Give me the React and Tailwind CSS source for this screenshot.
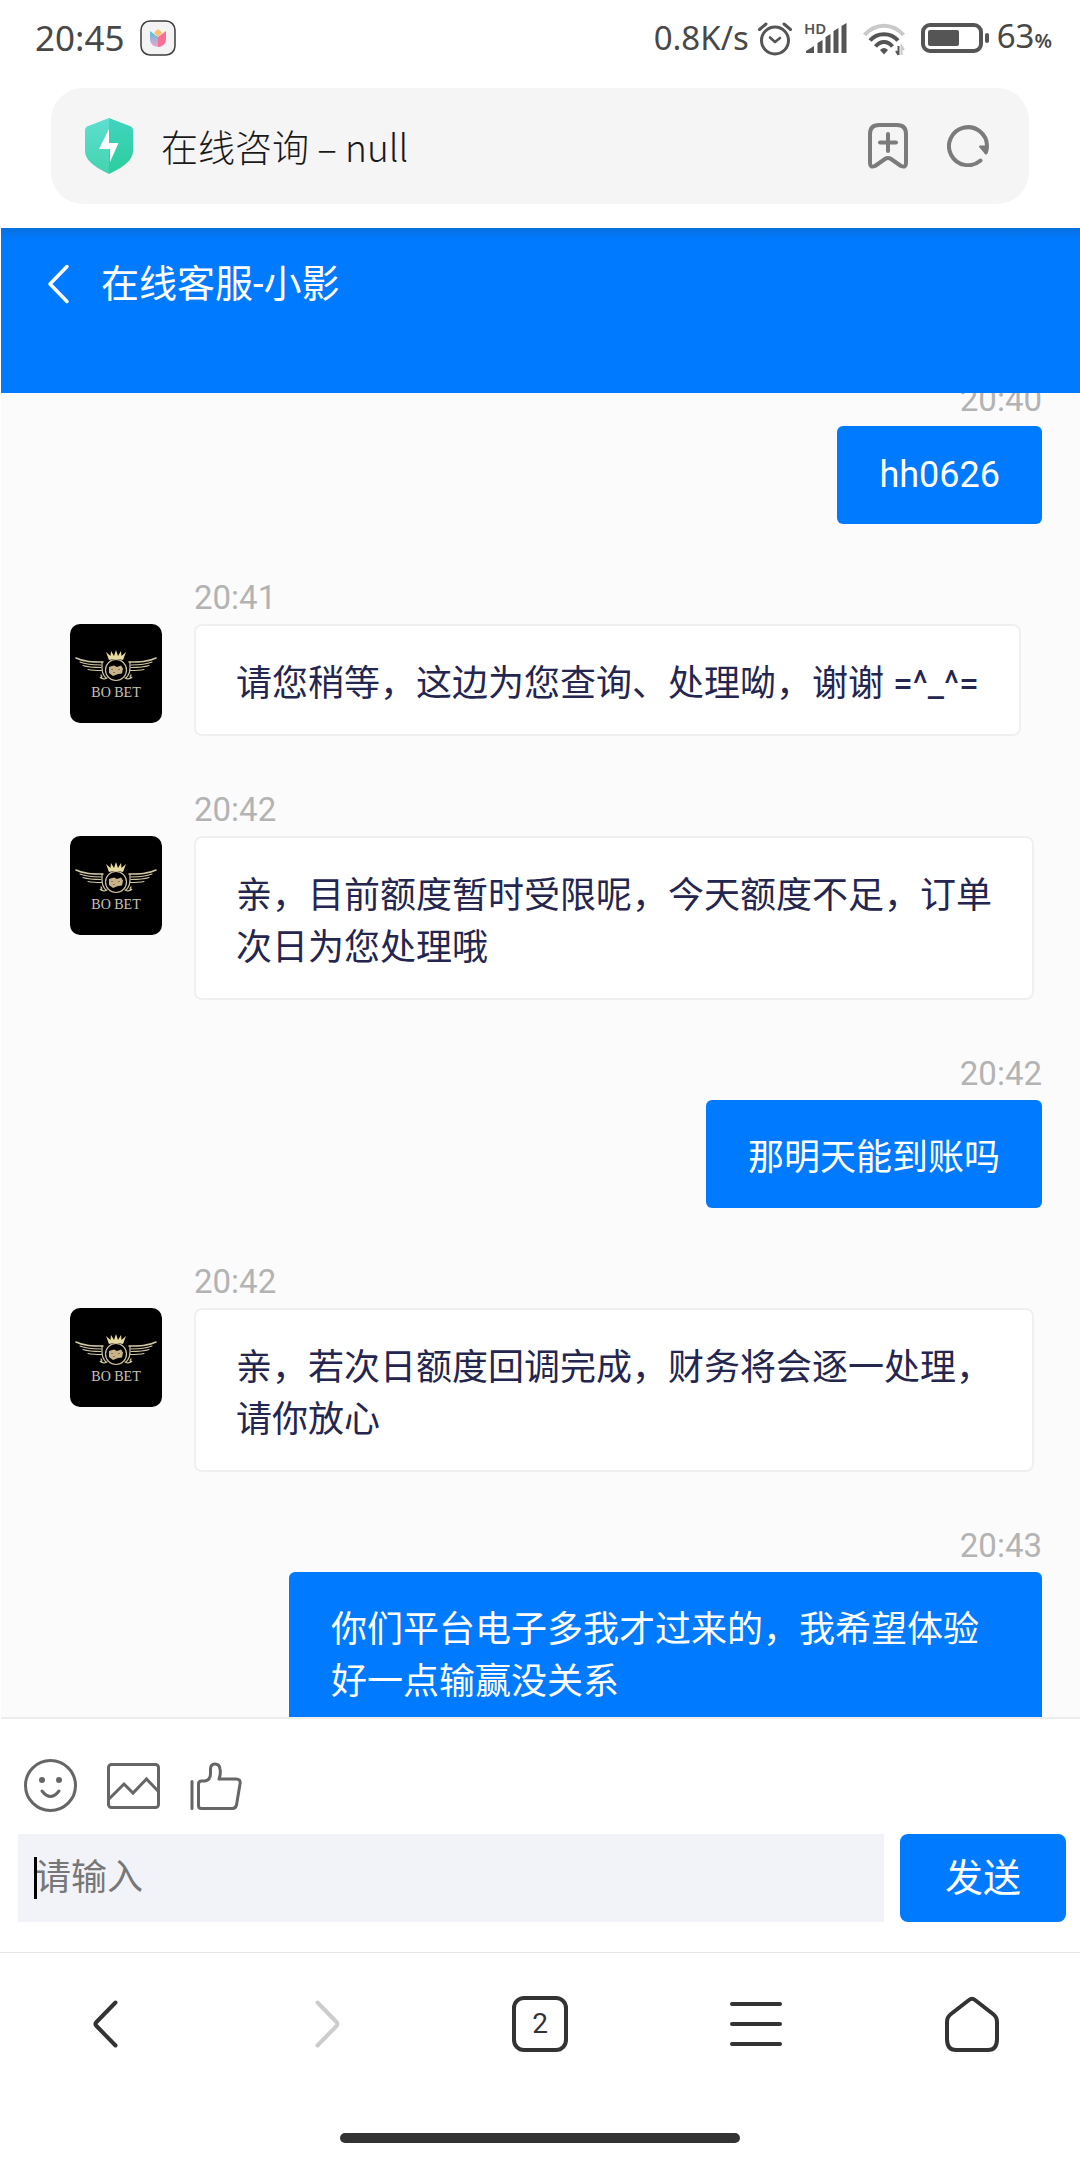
import React from 'react';

const messages = [
    { id: 1, mine: true, time: '20:40', text: 'hh0626' },
    { id: 2, mine: false, time: '20:41', text: '请您稍等，这边为您查询、处理呦，谢谢 =^_^=' },
    { id: 3, mine: false, time: '20:42', text: '亲，目前额度暂时受限呢，今天额度不足，订单次日为您处理哦' },
    { id: 4, mine: true, time: '20:42', text: '那明天能到账吗' },
    { id: 5, mine: false, time: '20:42', text: '亲，若次日额度回调完成，财务将会逐一处理，请你放心' },
    { id: 6, mine: true, time: '20:43', text: '你们平台电子多我才过来的，我希望体验好一点输赢没关系' },
];

const StatusBar = () => {
    return (
        <div className="flex h-[76px] shrink-0 items-center justify-between pl-[35px] pr-7 font-['Noto_Sans',sans-serif] text-[#484848]">
            <div className="flex items-center gap-4">
                <span className="text-[35px] leading-10">20:45</span>
                <svg width="36" height="36" viewBox="0 0 36 36" aria-hidden="true">
                    <defs>
                        <linearGradient id="petal" x1="0" y1="0" x2="0" y2="1">
                            <stop offset="0" stopColor="#4cc4dc" />
                            <stop offset="1" stopColor="#f0a0d0" />
                        </linearGradient>
                    </defs>
                    <rect x="1" y="1" width="34" height="34" rx="9" fill="#f3f3f3" stroke="#3c3c3c" strokeWidth="1.5" />
                    <path d="M18 9l4 3.5L18 17l-4-4.500z" fill="#fdc06a" />
                    <path d="M10 11l8 6v10c-5 0-8-4-8-8z" fill="url(#petal)" />
                    <path d="M26 11l-8 6v10c5 0 8-4 8-8z" fill="#fb6f94" />
                </svg>
            </div>

            <div className="flex items-center">
                <span className="text-[33px] leading-10">0.8K/s</span>
                {/* Alarm */}
                <svg className="ml-2" width="36" height="36" viewBox="0 0 36 36" fill="none" stroke="#555" strokeWidth="3" strokeLinecap="round" aria-hidden="true">
                    <circle cx="18" cy="20.5" r="13.5" />
                    <path d="M13 17.5l5 4.5 5-4" strokeWidth="2.6" strokeLinejoin="round" />
                    <path d="M2.5 9.5l6.5-5.5M33.5 9.5L27 4" />
                </svg>
                {/* Signal */}
                <svg className="ml-3 overflow-visible" width="42" height="34" viewBox="0 0 42 34" fill="#555" aria-hidden="true">
                    <text x="-1" y="13" fontSize="15" fontWeight="600" fontFamily="Noto Sans">HD</text>
                    <path d="M1 32v-2l8-5v7zM12.500 32V22l5-3v13zM20.500 32V16l5-3v19zM28.500 32V10l5-3v25zM36.500 32V5l5-3v30z" />
                </svg>
                {/* Wifi */}
                <svg className="ml-4" width="42" height="36" viewBox="0 0 42 36" fill="none" strokeWidth="4" aria-hidden="true">
                    <path d="M1.500 15C12 2.500 30 2.500 40.500 15" stroke="#c9c9c9" />
                    <path d="M7 20.500C14 12 28 12 35 20.500" stroke="#555" />
                    <path d="M12.500 26.500c5-6 12-6 17 0" stroke="#555" />
                    <path d="M17 30q4-4 8 0l-4 4.500z" fill="#555" />
                    <path d="M35.500 26v9M33 31l2.500 4" stroke="#555" strokeWidth="2" />
                    <path d="M38.500 35v-9l2.500 4" stroke="#c9c9c9" strokeWidth="2" />
                </svg>
                {/* Battery */}
                <svg className="ml-4" width="68" height="30" viewBox="0 0 68 30" fill="none" aria-hidden="true">
                    <rect x="2" y="2" width="58" height="26" rx="7" stroke="#555" strokeWidth="4" />
                    <rect x="7" y="7" width="31" height="16" rx="2" fill="#555" />
                    <rect x="64" y="10" width="4" height="10" rx="2" fill="#555" />
                </svg>
                <span className="ml-2 text-[33px] leading-10">
                    63<span className="text-[20px] font-semibold">%</span>
                </span>
            </div>
        </div>
    );
};

const AddressBar = () => {
    return (
        <div className="mx-[51px] mt-3 mb-6 flex h-[116px] shrink-0 items-center rounded-[32px] bg-[#f5f5f5] pl-[34px] pr-10">
            <svg width="48" height="56" viewBox="0 0 48 56" aria-hidden="true">
                <defs>
                    <linearGradient id="shieldLeft" x1="0" y1="0" x2="0" y2="1">
                        <stop offset="0" stopColor="#5ddfd0" />
                        <stop offset="1" stopColor="#43d3ae" />
                    </linearGradient>
                    <linearGradient id="shieldRight" x1="0" y1="0" x2="0" y2="1">
                        <stop offset="0" stopColor="#40d4c0" />
                        <stop offset="1" stopColor="#2ccd9c" />
                    </linearGradient>
                </defs>
                <path d="M24 0L2 8.500Q0 9.500 0 12v21c0 11 14 18 24 23z" fill="url(#shieldLeft)" />
                <path d="M24 0l22 8.500q2 1 2 3.500v21c0 11-14 18-24 23z" fill="url(#shieldRight)" />
                <path d="M24 11v14h9.500L25 44V31H14z" fill="#fff" />
            </svg>
            <span className="ml-7 flex-1 font-['Noto_Sans_CJK_SC',sans-serif] text-[37px] font-light leading-[54px] text-[#1a1a1a]">
                在线咨询 – null
            </span>
            <button type="button" aria-label="添加书签">
                <svg width="40" height="46" viewBox="0 0 40 46" fill="none" stroke="#7b7b7b" strokeWidth="4" strokeLinecap="round" strokeLinejoin="round">
                    <path d="M2 11q0-9 9-9h18q9 0 9 9v29q0 5-5 3l-10-7q-3-2-6 0l-10 7q-5 2-5-3z" />
                    <path d="M20 11v17M12 19.500h16" />
                </svg>
            </button>
            <button type="button" aria-label="刷新" className="ml-[39px]">
                <svg width="42" height="42" viewBox="0 0 42 42" fill="none" stroke="#7b7b7b" strokeWidth="4" strokeLinecap="round">
                    <path d="M33.500 35.500A19 19 0 1 1 40 21q0 3-1 6" />
                    <path d="M33 21.500h7l-1 7z" fill="#7b7b7b" strokeWidth="2" strokeLinejoin="round" />
                </svg>
            </button>
        </div>
    );
};

const ChatHeader = () => {
    return (
        <header className="flex h-[165px] shrink-0 items-start bg-linear-to-b from-[#0870e0] to-[#007aff] to-[12px] pt-7 pl-[46px] text-white">
            <button type="button" aria-label="返回" className="flex h-14 items-center">
                <svg width="24" height="40" viewBox="0 0 24 40" fill="none" stroke="currentColor" strokeWidth="3.500" strokeLinecap="round" strokeLinejoin="round">
                    <path d="M20 2.500L3 20l17 17.500" />
                </svg>
            </button>
            <h1 className="ml-[30px] text-[38px] leading-[56px]">在线客服-小影</h1>
        </header>
    );
};

const Avatar = () => {
    return (
        <svg className="shrink-0" width="92" height="99" viewBox="0 0 92 99" role="img" aria-label="BO BET">
            <rect width="92" height="99" rx="10" fill="#000" />
            {/* Wings */}
            <g fill="none" stroke="#cfc6a2" strokeLinecap="round">
                <path d="M6 34c8 4 17 4 27 4" strokeWidth="1.600" />
                <path d="M10 38c6 2.500 14 3 21 3M13 41.500c6 2 12 2 18 2M18 45.500c5 1 9 1 14 1" strokeWidth="1.100" />
                <path d="M32 38v6c0 5 2 8 4 10M31 51c2 2 0 4-1 2 2 2 5 2 7 1" strokeWidth="1.200" />
                <path d="M86 34c-8 4-17 4-27 4" strokeWidth="1.600" />
                <path d="M82 38c-6 2.500-14 3-21 3M79 41.500c-6 2-12 2-18 2M74 45.500c-5 1-9 1-14 1" strokeWidth="1.100" />
                <path d="M60 38v6c0 5-2 8-4 10M61 51c-2 2 0 4 1 2-2 2-5 2-7 1" strokeWidth="1.200" />
                <circle cx="46" cy="46" r="10.500" strokeWidth="1.200" />
            </g>
            {/* Dice */}
            <path d="M39 43l5-1.500 3 1.500 4-1.500 2 3-1 5-4 .5-5 2-4-3z" fill="#c9b48a" />
            <path d="M42 45v1M44 48v1M49 45v1" stroke="#4a3c22" />
            {/* Crown */}
            <path d="M39 36l-3-8 4.500 4 .5-5 3 5 2-6 2 6 3-5 .5 5 4.500-4-3 8q-7-2-14 0z" fill="#e8dba0" />
            <text x="46" y="73" textAnchor="middle" fontSize="14" fontFamily="Liberation Serif" fill="#c9c3b6">BO BET</text>
        </svg>
    );
};

const Message = ({ mine, time, text }) => {
    if (mine) {
        return (
            <li className="flex flex-col items-end pr-[38px]">
                <time className="mb-1.5 text-[33px] leading-10 text-[#b3b3b3]">{time}</time>
                <p className="max-w-[753px] rounded-md bg-[#007aff] px-[42px] py-7 text-[36px] leading-[normal] text-white">{text}</p>
            </li>
        );
    }
    return (
        <li className="flex flex-col pl-[69px] pr-10">
            <time className="mb-1.5 ml-[124px] text-[33px] leading-10 text-[#b3b3b3]">{time}</time>
            <div className="flex items-start gap-8">
                <Avatar />
                <p className="max-w-[840px] rounded-lg border-2 border-[#f0f0f0] bg-white px-10 py-7 text-[36px] leading-[normal] text-[#24264f]">{text}</p>
            </div>
        </li>
    );
};

const Composer = () => {
    return (
        <form className="shrink-0 border-t-2 border-[#ececec] pr-[14px] pb-[30px] pl-[17px]" onSubmit={(e) => e.preventDefault()}>
            <div className="flex h-[115px] items-center gap-[30px] pt-10 pb-[22px] pl-1.5 text-[#666]">
                <button type="button" aria-label="表情">
                    <svg width="53" height="53" viewBox="0 0 53 53" fill="none" stroke="currentColor" strokeWidth="3" strokeLinecap="round">
                        <circle cx="26.500" cy="26.500" r="25" />
                        <circle cx="18" cy="21" r="3" fill="currentColor" stroke="none" />
                        <circle cx="35" cy="21" r="3" fill="currentColor" stroke="none" />
                        <path d="M18 32q8.500 11 17 0" />
                    </svg>
                </button>
                <button type="button" aria-label="图片">
                    <svg width="53" height="46" viewBox="0 0 53 46" fill="none" stroke="currentColor" strokeWidth="3">
                        <rect x="1.500" y="1.500" width="50" height="43" rx="3" />
                        <path d="M2 36l15-15 9 9 13.500-14L51 28" />
                    </svg>
                </button>
                <button type="button" aria-label="点赞">
                    <svg width="53" height="48" viewBox="0 0 53 48" fill="none" stroke="currentColor" strokeWidth="3" strokeLinecap="round" strokeLinejoin="round">
                        <path d="M2 19.500v27" />
                        <path d="M8.500 22q0-3 3-3h3q6-1 6-7V7q0-5 4.500-5t5 5q1 5-1 10h17q5 0 4 5l-3.500 21q-1 3.500-4 3.500h-31q-3 0-3-3z" />
                    </svg>
                </button>
            </div>
            <div className="flex items-stretch gap-4">
                <div className="relative flex-1">
                    <input type="text" aria-label="消息" placeholder="请输入" className="h-22 w-full bg-[#f2f3f8] pl-[17px] text-[36px] text-[#333] outline-none placeholder:text-[#777]" />
                    <span className="absolute top-[23px] left-4 h-[42px] w-[3px] bg-black" />
                </div>
                <button type="submit" className="h-22 w-[166px] rounded-lg bg-[#007aff] text-[38px] text-white">发送</button>
            </div>
        </form>
    );
};

const BrowserNav = () => {
    return (
        <nav className="shrink-0 border-t border-[#e6e6e6] text-[#333]">
            <div className="grid h-[142px] grid-cols-5 place-items-center">
                <button type="button" aria-label="后退">
                    <svg width="60" height="60" viewBox="0 0 60 60" fill="none" stroke="currentColor" strokeWidth="4" strokeLinecap="round" strokeLinejoin="round">
                        <path d="M37.500 8.500L18.500 28q-2 2 0 4l19 19.500" />
                    </svg>
                </button>
                <button type="button" aria-label="前进" disabled className="text-[#ccc]">
                    <svg width="60" height="60" viewBox="0 0 60 60" fill="none" stroke="currentColor" strokeWidth="4" strokeLinecap="round" strokeLinejoin="round">
                        <path d="M23.500 8.500L42.500 28q2 2 0 4l-19 19.500" />
                    </svg>
                </button>
                <button type="button" aria-label="标签页" className="flex size-14 items-center justify-center rounded-xl border-4 border-[#333] text-[28px] leading-none">
                    2
                </button>
                <button type="button" aria-label="菜单">
                    <svg width="60" height="60" viewBox="0 0 60 60" stroke="currentColor" strokeWidth="4" strokeLinecap="round">
                        <path d="M6 10h48M6 30h48M6 50h48" />
                    </svg>
                </button>
                <button type="button" aria-label="主页">
                    <svg width="60" height="60" viewBox="0 0 60 60" fill="none" stroke="currentColor" strokeWidth="4" strokeLinejoin="round">
                        <path d="M27 6q3-2.500 6 0l18 14q4 3 4 8v17q0 11-9 11H14q-9 0-9-11V28q0-5 4-8z" />
                    </svg>
                </button>
            </div>
            <div className="flex h-[65px] items-start justify-center pt-[38px]">
                <div className="h-2.5 w-[400px] rounded-full bg-[#333]" />
            </div>
        </nav>
    );
};

const App = () => {
    return (
        <div lang="zh-CN" className="flex h-screen flex-col bg-white font-[Roboto,'Noto_Sans_CJK_SC',sans-serif]">
            <StatusBar />
            <AddressBar />
            <main className="ml-px flex min-h-0 flex-1 flex-col">
                <ChatHeader />
                <div className="min-h-0 flex-1 overflow-hidden bg-[#fbfbfb]">
                    <ul className="-mt-[13px] flex flex-col gap-[54px]">
                        {messages.map((message) => (
                            <Message key={message.id} {...message} />
                        ))}
                    </ul>
                </div>
                <Composer />
            </main>
            <BrowserNav />
        </div>
    );
};

export default App;
